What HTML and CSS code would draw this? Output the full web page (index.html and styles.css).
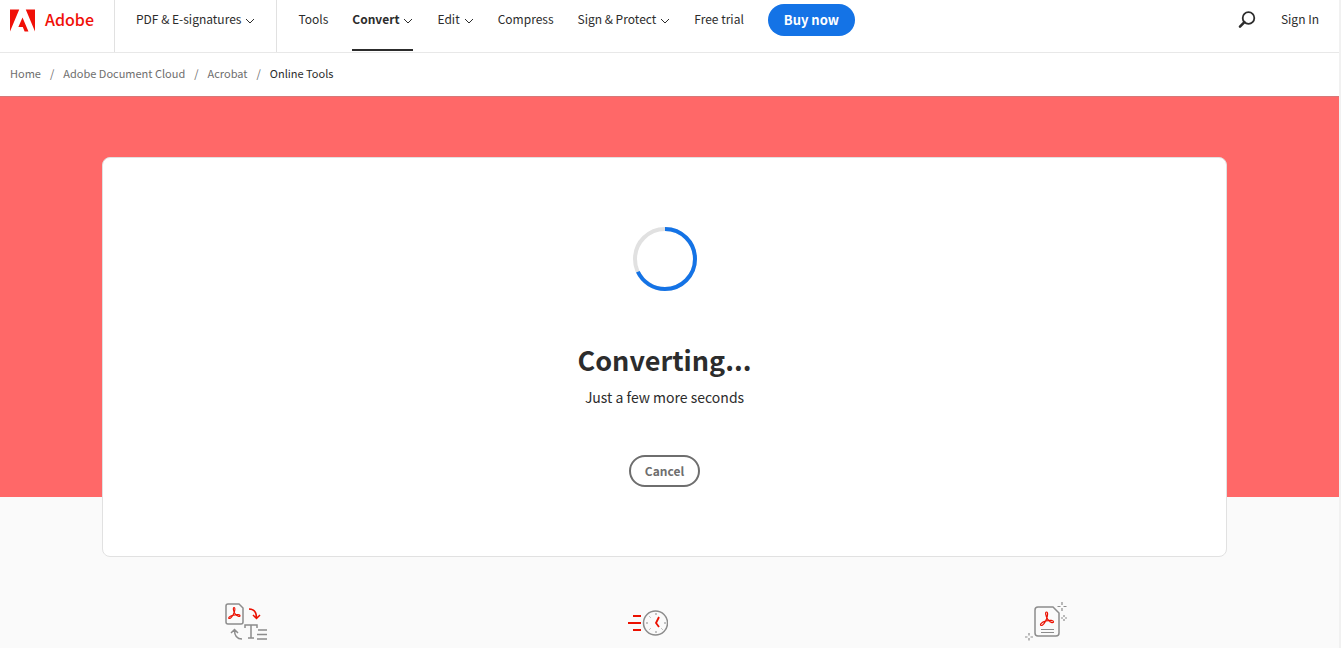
FILE: index.html
```html
<!DOCTYPE html>
<html lang="en">
<head>
    <meta charset="UTF-8">
    <meta name="viewport" content="width=device-width, initial-scale=1.0">
    <title>Convert PDF | Adobe Acrobat</title>
    <link rel="stylesheet" href="styles.css">
</head>
<body>
    <header class="header">
        <a class="brand" href="#">
            <svg class="brand-logo" width="25" height="23" viewBox="0 0 26 23" aria-hidden="true">
                <path fill="#f01008" d="M0 0h9.6L0 23zM16.4 0H26v23zM13 8.4 19.2 23h-4l-1.9-4.7H8.7z"/>
            </svg>
            <span>Adobe</span>
        </a>
        <nav class="nav">
            <div class="nav-product">
                <button class="nav-item" type="button">PDF &amp; E-signatures
                    <svg class="chevron" viewBox="0 0 10 7" aria-hidden="true"><path d="M1 1l4 4 4-4"/></svg>
                </button>
            </div>
            <div class="nav-links">
                <a class="nav-item" href="#">Tools</a>
                <button class="nav-item active" type="button">Convert
                    <svg class="chevron" viewBox="0 0 10 7" aria-hidden="true"><path d="M1 1l4 4 4-4"/></svg>
                </button>
                <button class="nav-item" type="button">Edit
                    <svg class="chevron" viewBox="0 0 10 7" aria-hidden="true"><path d="M1 1l4 4 4-4"/></svg>
                </button>
                <a class="nav-item" href="#">Compress</a>
                <button class="nav-item" type="button">Sign &amp; Protect
                    <svg class="chevron" viewBox="0 0 10 7" aria-hidden="true"><path d="M1 1l4 4 4-4"/></svg>
                </button>
                <a class="nav-item" href="#">Free trial</a>
                <a class="buy-btn" href="#">Buy now</a>
            </div>
        </nav>
        <div class="header-right">
            <button class="search-btn" type="button" aria-label="Search">
                <svg width="18" height="18" viewBox="0 0 18 18" fill="none" stroke="#2c2c2c" aria-hidden="true">
                    <circle cx="10.500" cy="7" r="5.800" stroke-width="1.800"/>
                    <path d="M6.400 11.200 2 15.600" stroke-width="2.600" stroke-linecap="round"/>
                </svg>
            </button>
            <a class="nav-item" href="#">Sign In</a>
        </div>
    </header>

    <nav aria-label="Breadcrumb">
        <ol class="breadcrumb">
            <li><a href="#">Home</a></li>
            <li><a href="#">Adobe Document Cloud</a></li>
            <li><a href="#">Acrobat</a></li>
            <li aria-current="page">Online Tools</li>
        </ol>
    </nav>

    <main>
        <section class="hero">
            <div class="card">
                <!-- Progress ring, two thirds done -->
                <svg class="progress" width="64" height="64" viewBox="0 0 64 64" fill="none" stroke-width="4" role="img" aria-label="Converting">
                    <circle cx="32" cy="32" r="30" stroke="#e1e1e1"/>
                    <circle cx="32" cy="32" r="30" stroke="#1473e6" pathLength="100" stroke-dasharray="68 32" transform="rotate(-90 32 32)"/>
                </svg>
                <h1>Converting...</h1>
                <p>Just a few more seconds</p>
                <button class="cancel-btn" type="button">Cancel</button>
            </div>
        </section>

        <section class="features">
            <!-- PDF to text -->
            <svg width="44" height="40" viewBox="0 0 44 40" fill="none" stroke="#8c8c8c" stroke-width="1.500" aria-hidden="true">
                <path d="M4 2h11l4 4v14a2 2 0 0 1-2 2H4a2 2 0 0 1-2-2V4a2 2 0 0 1 2-2z"/>
                <path stroke="#eb1000" stroke-width="1.100" d="M10 5.500c1.300 0 1 2.900.2 4.800C9 13.500 7 16.500 5.300 16.500c-1.400 0-.5-2.300 4.200-3.400 3.900-.9 6.600-.5 6.600.6 0 1.400-3.300.8-5.200-2.200C9.300 9.300 8.800 5.500 10 5.500z"/>
                <path stroke="#eb1000" d="M25 7c5 0 7.500 3 7.500 9M29 13l3.500 3.500 3.500-3.500"/>
                <path d="M18 37c-4.500 0-7.500-3-7.500-9M7 31l3.500-3.500 3.500 3.500M21 26v-3h12v3M27 23v13M24 36h6M34 28h9M33 32.500h10M33 37h10"/>
            </svg>
            <!-- Fast conversion -->
            <svg width="44" height="40" viewBox="-2 0 44 40" fill="none" stroke="#8c8c8c" stroke-width="1.500" aria-hidden="true">
                <circle cx="29.500" cy="21" r="12"/>
                <path stroke-width="1" d="M30 11v2M30 29v2M20 21h2M38 21h2M23.500 14.500l1 1M23.500 27.500l1-1M36.500 27.500l-1-1"/>
                <path stroke="#eb1000" stroke-width="1.800" d="M33 15l-3 6 3 4M7 14h8M2 21h13M7 28h8"/>
            </svg>
            <!-- High quality PDF -->
            <svg width="44" height="40" viewBox="0 0 44 40" fill="none" stroke="#8c8c8c" stroke-width="1.500" aria-hidden="true">
                <path d="M13 5h15l6 6v20a3 3 0 0 1-3 3H13a3 3 0 0 1-3-3V8a3 3 0 0 1 3-3z"/>
                <path stroke="#eb1000" stroke-width="1.200" d="M21.500 10c1.700 0 1.200 3.700 0 7-1.400 3.500-3.800 6.500-5.300 6.500-1.700 0-.5-3.300 4.800-4.600 4.200-1 7.500-.6 7.500.8 0 1.700-3.700.9-5.900-2.600C20.500 13.500 20 10 21.500 10z"/>
                <path stroke-width="1.200" d="M16 27.500h13M16 30.500h13M37 0v3M37 6v3M32.500 4.500h3M38.500 4.500h3M39 13v2M39 17v2M36 16h2M40 16h2M4 31v2.500M4 36v2.500M0 35h2.500M5.500 35H8"/>
            </svg>
        </section>
    </main>
</body>
</html>
```
FILE: styles.css
```css
* {
    margin: 0;
    padding: 0;
    box-sizing: border-box;
}
body {
    min-height: 100vh;
    background: #fafafa;
    border-right: 2px solid #f1f1f1;
    color: #2c2c2c;
    font-family: "Noto Sans CJK SC", "Noto Sans", sans-serif;
    font-size: 12px;
    line-height: 20px;
}
a {
    color: inherit;
    text-decoration: none;
}
button {
    background: none;
    border: none;
    color: inherit;
    font: inherit;
    cursor: pointer;
}

/* Header */
.header {
    display: flex;
    height: 53px;
    background: #fff;
    border-bottom: 1px solid #e8e8e8;
}
.brand {
    display: flex;
    gap: 10px;
    width: 115px;
    padding: 9px 0 0 10px;
    border-right: 1px solid #e1e1e1;
    color: #f01008;
    font-size: 16px;
    font-weight: 500;
}
.nav {
    display: flex;
}
.nav-product {
    display: flex;
    padding: 0 21px;
    border-right: 1px solid #e1e1e1;
}
.nav-links {
    display: flex;
    gap: 24px;
    padding-left: 21px;
}
.nav-item {
    display: flex;
    gap: 4px;
    height: 51px;
    padding-top: 9px;
    border-bottom: 2px solid transparent;
    white-space: nowrap;
}
.nav-item.active {
    border-bottom-color: #2c2c2c;
    font-weight: bold;
}
.chevron {
    width: 10px;
    height: 7px;
    margin-top: 9px;
    fill: none;
    stroke: #2c2c2c;
}
.buy-btn {
    height: 32px;
    margin-top: 4px;
    padding: 6px 16px;
    border-radius: 16px;
    background: #1473e6;
    color: #fff;
    font-size: 13px;
    font-weight: bold;
    white-space: nowrap;
}
.header-right {
    display: flex;
    gap: 25px;
    margin-left: auto;
    padding-right: 20px;
}
.search-btn {
    height: 18px;
    margin-top: 11px;
}

/* Breadcrumb */
.breadcrumb {
    display: flex;
    height: 43px;
    padding: 10px;
    background: #fff;
    color: #6e6e6e;
    font-size: 11px;
    list-style: none;
}
.breadcrumb li + li::before {
    content: "/";
    margin: 0 9px;
    color: #6e6e6e;
}
.breadcrumb [aria-current] {
    color: #2c2c2c;
}

/* Converter */
.hero {
    padding: 60px 112px 0 102px;
    background: linear-gradient(#ff6868 400px, #fafafa 400px);
    border-top: 1px solid #d67878;
}
.card {
    display: flex;
    flex-direction: column;
    align-items: center;
    height: 400px;
    padding-top: 69px;
    background: #fff;
    border: 1px solid #e1e1e1;
    border-radius: 8px;
    text-align: center;
}
.card h1 {
    margin-top: 49px;
    font-size: 27px;
    font-weight: bold;
    line-height: 40px;
}
.card p {
    margin-top: 7px;
    font-size: 14px;
}
.cancel-btn {
    height: 32px;
    margin-top: 48px;
    padding: 0 14px;
    border: 2px solid #6e6e6e;
    border-radius: 16px;
    color: #6e6e6e;
    font-weight: bold;
    line-height: 26px;
}

/* Features */
.features {
    display: grid;
    grid-template-columns: repeat(3, 1fr);
    justify-items: center;
    padding: 45px 92px 0 46px;
}
```
